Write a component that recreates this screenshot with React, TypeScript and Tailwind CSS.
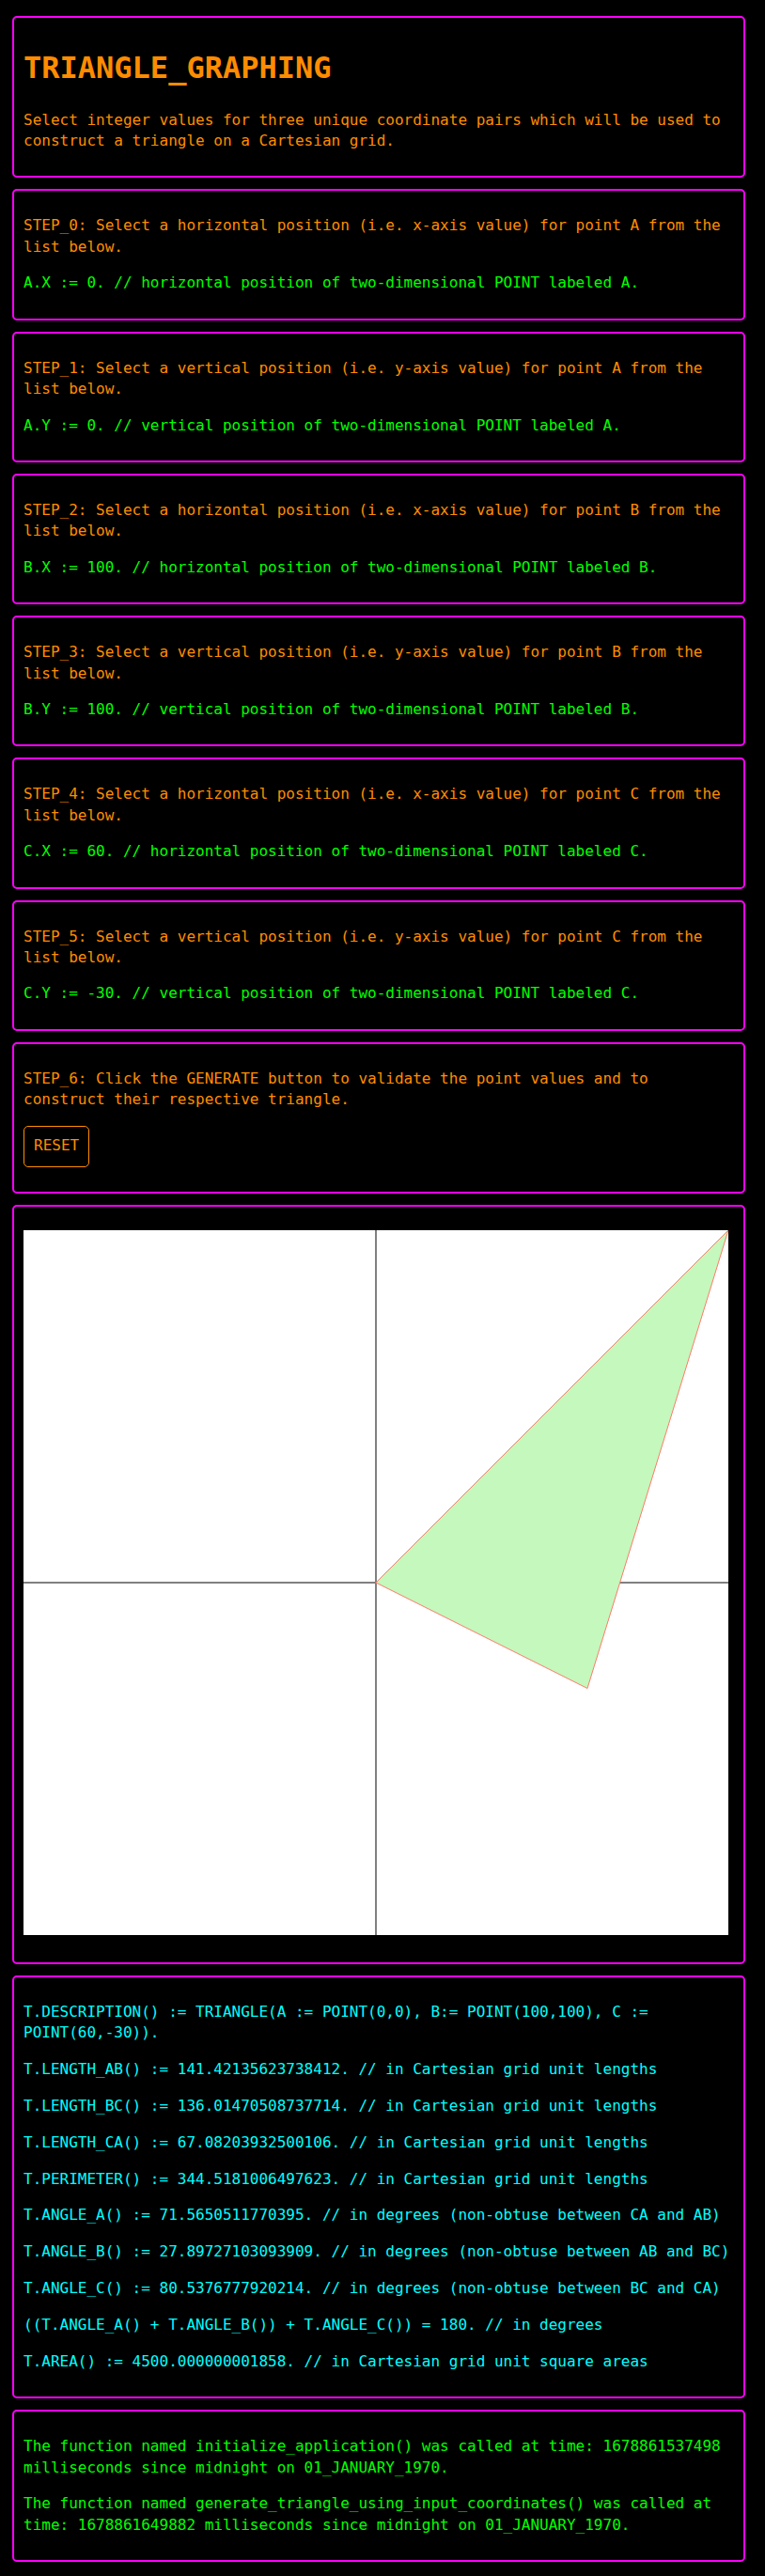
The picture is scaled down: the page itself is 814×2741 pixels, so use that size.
import React from "react";

const Panel = ({ children }: { children: React.ReactNode }) => (
  <div className="w-[780px] border-2 border-[#ff00ff] rounded-[5px] px-[10px] py-[10px] bg-black">
    {children}
  </div>
);

const steps = [
  {
    s: "STEP_0: Select a horizontal position (i.e. x-axis value) for point A from the list below.",
    g: "A.X := 0. // horizontal position of two-dimensional POINT labeled A.",
  },
  {
    s: "STEP_1: Select a vertical position (i.e. y-axis value) for point A from the list below.",
    g: "A.Y := 0. // vertical position of two-dimensional POINT labeled A.",
  },
  {
    s: "STEP_2: Select a horizontal position (i.e. x-axis value) for point B from the list below.",
    g: "B.X := 100. // horizontal position of two-dimensional POINT labeled B.",
  },
  {
    s: "STEP_3: Select a vertical position (i.e. y-axis value) for point B from the list below.",
    g: "B.Y := 100. // vertical position of two-dimensional POINT labeled B.",
  },
  {
    s: "STEP_4: Select a horizontal position (i.e. x-axis value) for point C from the list below.",
    g: "C.X := 60. // horizontal position of two-dimensional POINT labeled C.",
  },
  {
    s: "STEP_5: Select a vertical position (i.e. y-axis value) for point C from the list below.",
    g: "C.Y := -30. // vertical position of two-dimensional POINT labeled C.",
  },
];

const results = [
  "T.DESCRIPTION() := TRIANGLE(A := POINT(0,0), B:= POINT(100,100), C := POINT(60,-30)).",
  "T.LENGTH_AB() := 141.42135623738412. // in Cartesian grid unit lengths",
  "T.LENGTH_BC() := 136.01470508737714. // in Cartesian grid unit lengths",
  "T.LENGTH_CA() := 67.08203932500106. // in Cartesian grid unit lengths",
  "T.PERIMETER() := 344.5181006497623. // in Cartesian grid unit lengths",
  "T.ANGLE_A() := 71.5650511770395. // in degrees (non-obtuse between CA and AB)",
  "T.ANGLE_B() := 27.89727103093909. // in degrees (non-obtuse between AB and BC)",
  "T.ANGLE_C() := 80.5376777920214. // in degrees (non-obtuse between BC and CA)",
  "((T.ANGLE_A() + T.ANGLE_B()) + T.ANGLE_C()) = 180. // in degrees",
  "T.AREA() := 4500.000000001858. // in Cartesian grid unit square areas",
];

export default function App() {
  return (
    <div className="min-h-screen bg-black pt-[17px] pl-[13px] pb-[15px] font-['DejaVu_Sans_Mono',monospace] text-[16px] leading-[22.4px]">
      <div className="flex flex-col gap-[12px]">
        <Panel>
          <h1 className="my-[21.44px] text-[32px] leading-[44.8px] font-bold text-[#ff8c00]">
            TRIANGLE_GRAPHING
          </h1>
          <p className="my-4 text-[#ff8c00]">
            Select integer values for three unique coordinate pairs which will be used to construct a triangle on a Cartesian grid.
          </p>
        </Panel>

        {steps.map((st) => (
          <Panel key={st.s}>
            <p className="my-4 text-[#ff8c00]">{st.s}</p>
            <p className="my-4 text-[#00ff00]">{st.g}</p>
          </Panel>
        ))}

        <Panel>
          <p className="my-4 text-[#ff8c00]">
            STEP_6: Click the GENERATE button to validate the point values and to construct their respective triangle.
          </p>
          <div className="my-4">
            <button className="block h-[44px] px-[10px] border border-[#ff8c00] rounded-[5px] bg-black text-[#ff8c00] text-[16px] leading-[22.4px] font-['DejaVu_Sans_Mono',monospace]">
              RESET
            </button>
          </div>
        </Panel>

        <Panel>
          <div className="mt-[15px] mb-[19px]">
            <svg width="750" height="750" viewBox="0 0 750 750" className="block">
              <rect x="0" y="0" width="750" height="750" fill="#ffffff" />
              <line x1="375" y1="0" x2="375" y2="750" stroke="#808080" strokeWidth="2" />
              <line x1="0" y1="375" x2="750" y2="375" stroke="#808080" strokeWidth="2" />
              <polygon
                points="375,375 750,0 600,487.5"
                fill="#c4f8bc"
                stroke="#ff7a6a"
                strokeWidth="1"
              />
            </svg>
          </div>
        </Panel>

        <Panel>
          {results.map((r) => (
            <p key={r} className="my-4 text-[#00ffff] leading-[22.8px]">
              {r}
            </p>
          ))}
        </Panel>

        <Panel>
          <p className="my-4 text-[#00ff00]">
            The function named initialize_application() was called at time: 1678861537498 milliseconds since midnight on 01_JANUARY_1970.
          </p>
          <p className="my-4 text-[#00ff00]">
            The function named generate_triangle_using_input_coordinates() was called at time: 1678861649882 milliseconds since midnight on 01_JANUARY_1970.
          </p>
        </Panel>
      </div>
    </div>
  );
}
